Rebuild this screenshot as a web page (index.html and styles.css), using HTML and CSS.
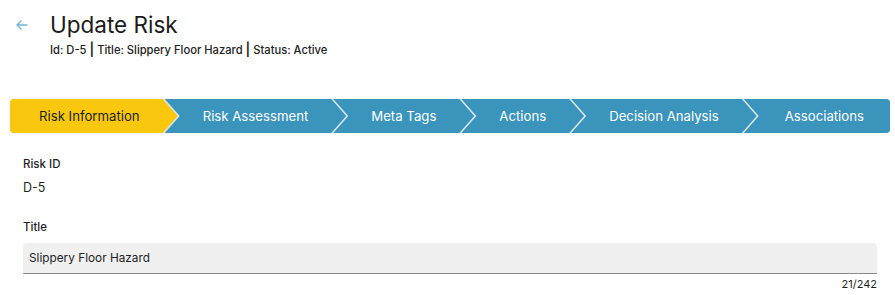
FILE: index.html
```html
<!DOCTYPE html>
<html lang="en">

<head>
    <meta charset="UTF-8">
    <meta name="viewport" content="width=device-width, initial-scale=1.0">
    <title>Update Risk</title>
    <link rel="stylesheet" href="styles.css">
</head>

<body>

    <!-- Page header -->
    <div class="page-header">
        <button class="back-btn" aria-label="Back">
            <svg width="12" height="10" viewBox="0 0 12 10" fill="none" stroke="currentColor" stroke-width="1.3"
                stroke-linecap="round" stroke-linejoin="round">
                <path d="M11 5H1.5" />
                <path d="M5 1L1 5l4 4" />
            </svg>
        </button>
        <div class="title-block">
            <h1>Update Risk</h1>
            <p class="meta">Id: D-5 <span class="sep">|</span> Title: Slippery Floor Hazard <span class="sep">|</span> Status: Active</p>
        </div>
    </div>

    <!-- Steps -->
    <div class="stepper">
        <div class="step first active">Risk Information</div>
        <div class="step">Risk Assessment</div>
        <div class="step">Meta Tags</div>
        <div class="step">Actions</div>
        <div class="step">Decision Analysis</div>
        <div class="step last">Associations</div>
    </div>

    <!-- Risk information form -->
    <div class="risk-form">
        <div class="field">
            <label>Risk ID</label>
            <div class="value">D-5</div>
        </div>

        <div class="field">
            <label for="title">Title</label>
            <input type="text" id="title" class="text-input" value="Slippery Floor Hazard">
            <div class="counter">21/242</div>
        </div>
    </div>

</body>

</html>
```

FILE: styles.css
```css
* {
    margin: 0;
    padding: 0;
    box-sizing: border-box;
}

body {
    font-family: Inter, "Noto Sans", sans-serif;
    background-color: #ffffff;
    color: #1f1f1f;
}

/* Header */
.page-header {
    display: flex;
    align-items: flex-start;
    padding: 10px 0 0 16px;
    height: 99px;
}

.back-btn {
    border: none;
    background: none;
    color: #74b3d6;
    cursor: pointer;
    display: flex;
    margin-top: 10px;
    width: 34px;
}

.title-block h1 {
    font-size: 22.5px;
    font-weight: 400;
    line-height: 30px;
    color: #1b1b1b;
}

.title-block .meta {
    font-size: 11.2px;
    font-weight: 500;
    margin-top: 1px;
    color: #222;
}

.meta .sep {
    font-weight: 600;
    font-size: 13px;
}

/* Stepper */
.stepper {
    display: flex;
    margin: 0 5px 0 10px;
    height: 34px;
    background-color: #dde9f0;
    border-radius: 4px;
    overflow: hidden;
}

.step {
    display: flex;
    align-items: center;
    white-space: nowrap;
    font-size: 13.2px;
    color: #ffffff;
    background-color: #3a94bc;
    padding: 0 38px;
    margin-left: -13px;
    clip-path: polygon(0 0, calc(100% - 15px) 0, 100% 50%, calc(100% - 15px) 100%, 0 100%, 15px 50%);
}

.step.first {
    margin-left: 0;
    padding-left: 29px;
    clip-path: polygon(0 0, calc(100% - 15px) 0, 100% 50%, calc(100% - 15px) 100%, 0 100%);
}

.step.last {
    flex: 1;
    justify-content: center;
    padding: 0 0 0 15px;
    clip-path: polygon(0 0, 100% 0, 100% 100%, 0 100%, 15px 50%);
}

.step.active {
    background-color: #f8c70e;
    color: #1f1f1f;
}

/* Form */
.risk-form {
    padding: 24px 18px 0 23px;
}

.field {
    margin-bottom: 14px;
}

.field label {
    display: block;
    font-size: 11.5px;
    font-weight: 500;
    margin-bottom: 9px;
}

.field .value {
    font-size: 12.5px;
    line-height: 16px;
    margin-bottom: 24px;
}

.text-input {
    width: 100%;
    height: 31px;
    padding: 0 6px;
    font-family: inherit;
    font-size: 11.8px;
    color: #222;
    background-color: #f0f0f0;
    border: none;
    border-bottom: 1.5px solid #8a8a8a;
    border-radius: 4px 4px 0 0;
}

.counter {
    text-align: right;
    font-size: 11px;
    margin-top: 3px;
}
```
